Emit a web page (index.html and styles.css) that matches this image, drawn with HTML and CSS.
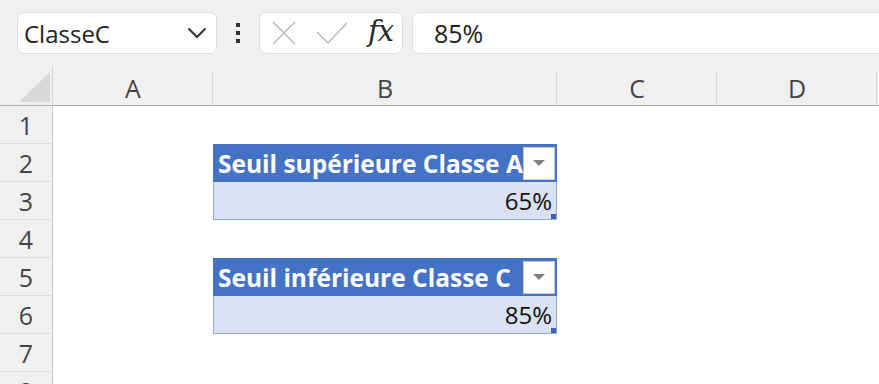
FILE: index.html
```html
<!DOCTYPE html>
<html lang="fr">
<head>
  <meta charset="UTF-8" />
  <meta name="viewport" content="width=device-width, initial-scale=1.0"/>
  <title>Classeur</title>
  <link rel="stylesheet" href="styles.css">
</head>
<body>
  <div class="toolbar">
    <div class="name-box">
      <span class="name">ClasseC</span>
      <svg class="chevron" width="20" height="12" viewBox="0 0 20 12">
        <path d="M1.5 1.5 L10 10 L18.5 1.5" fill="none" stroke="#333" stroke-width="2"/>
      </svg>
    </div>
    <div class="dots">
      <span></span><span></span><span></span>
    </div>
    <div class="fx-box">
      <svg class="icon-x" width="24" height="24" viewBox="0 0 24 24">
        <path d="M1 1 L23 23 M23 1 L1 23" stroke="#bdbdbd" stroke-width="1.6" fill="none"/>
      </svg>
      <svg class="icon-check" width="32" height="22" viewBox="0 0 32 22">
        <path d="M1 10 L12 21 L31 1" stroke="#bdbdbd" stroke-width="1.6" fill="none"/>
      </svg>
      <span class="fx">fx</span>
    </div>
    <div class="formula">85%</div>
  </div>

  <div class="sheet">
    <div class="corner"><span class="tri"></span></div>
    <div class="col-head">A</div>
    <div class="col-head">B</div>
    <div class="col-head">C</div>
    <div class="col-head">D</div>
    <div class="col-head last"></div>

    <div class="row-head">1</div>
    <div class="row-head">2</div>
    <div class="row-head">3</div>
    <div class="row-head">4</div>
    <div class="row-head">5</div>
    <div class="row-head">6</div>
    <div class="row-head">7</div>
    <div class="row-head">8</div>

    <div class="tbl tbl-a">
      <div class="tbl-head">
        <span>Seuil supérieure Classe A</span>
        <span class="filter"></span>
      </div>
      <div class="tbl-cell">65%<span class="handle"></span></div>
    </div>

    <div class="tbl tbl-c">
      <div class="tbl-head">
        <span>Seuil inférieure Classe C</span>
        <span class="filter"></span>
      </div>
      <div class="tbl-cell">85%<span class="handle"></span></div>
    </div>
  </div>
</body>
</html>
```

FILE: styles.css
```css
body {
  margin: 0;
  padding: 0;
  font-family: 'Open Sans', 'Noto Sans', sans-serif;
  background-color: #f0f0f0;
  color: #222;
  height: 384px;
  overflow: hidden;
}

/* formula bar */
.toolbar {
  display: flex;
  align-items: center;
  height: 66px;
  padding-left: 17px;
  box-sizing: border-box;
  overflow: hidden;
}

.name-box, .fx-box, .formula {
  height: 42px;
  box-sizing: border-box;
  background: #fff;
  border: 1px solid #dedede;
  border-radius: 7px;
  display: flex;
  align-items: center;
}

.name-box {
  width: 200px;
  padding: 0 9px 0 6px;
  justify-content: space-between;
}

.name {
  font-size: 24px;
  color: #222;
}

.dots {
  width: 42px;
  display: flex;
  flex-direction: column;
  align-items: center;
  gap: 4px;
}

.dots span {
  width: 4px;
  height: 4px;
  background: #333;
}

.fx-box {
  width: 144px;
  padding: 0 9px 0 12px;
  gap: 20px;
}

.fx {
  font-family: 'DejaVu Serif', 'Liberation Serif', serif;
  font-style: italic;
  font-size: 29px;
  color: #2a2a2a;
  margin-left: auto;
  line-height: 1;
  margin-bottom: 3px;
  letter-spacing: -1px;
}

.formula {
  flex: 1;
  margin-left: 9px;
  margin-right: -20px;
  padding-left: 21px;
  font-size: 25px;
  color: #222;
}

/* grid */
.sheet {
  display: grid;
  grid-template-columns: 53px 160px 344px 160px 160px 1fr;
  grid-template-rows: 40px repeat(8, 38px);
  background: #fff;
}

.corner {
  background: #f0f0f0;
  border-bottom: 1px solid #ababab;
  border-right: 1px solid #d2d2d2;
  display: flex;
  align-items: flex-end;
  justify-content: flex-end;
  padding: 0 2px 3px 0;
}

.tri {
  width: 31px;
  height: 30px;
  background: #d8d8d8;
  clip-path: polygon(100% 0, 100% 100%, 0 100%);
}

.col-head {
  background: linear-gradient(#d6d6d6, #d6d6d6) right 6px / 1px calc(100% - 6px) no-repeat, #f0f0f0;
  border-bottom: 1px solid #ababab;
  font-size: 25px;
  color: #444;
  display: flex;
  align-items: center;
  justify-content: center;
  padding-top: 4px;
}

.col-head.last {
  background: #f0f0f0;
}

.row-head {
  grid-column: 1;
  background: #f0f0f0;
  border-right: 1px solid #c8c8c8;
  border-bottom: 1px solid #dcdcdc;
  font-size: 25px;
  color: #444;
  display: flex;
  align-items: center;
  justify-content: center;
}

/* tables */
.tbl {
  grid-column: 3;
  display: flex;
  flex-direction: column;
}

.tbl-a {
  grid-row: 3 / span 2;
}

.tbl-c {
  grid-row: 6 / span 2;
}

.tbl-head {
  height: 38px;
  background: #4472c4;
  color: #fff;
  font-weight: bold;
  font-size: 24.5px;
  display: flex;
  align-items: center;
  padding-left: 5px;
  white-space: nowrap;
  overflow: hidden;
}

.filter {
  flex-shrink: 0;
  margin-left: auto;
  margin-right: 2px;
  width: 32px;
  height: 33px;
  box-sizing: border-box;
  background: #fff;
  border: 1px solid #c9c9c9;
  display: flex;
  align-items: center;
  justify-content: center;
}

.filter::after {
  content: "";
  border-left: 6px solid transparent;
  border-right: 6px solid transparent;
  border-top: 6px solid #808080;
}

.tbl-cell {
  position: relative;
  height: 38px;
  box-sizing: border-box;
  background: #d9e1f2;
  border: 1px solid #8eaadb;
  border-top: none;
  font-size: 24px;
  color: #111;
  display: flex;
  align-items: center;
  justify-content: flex-end;
  padding-right: 4px;
}

.handle {
  position: absolute;
  right: 0;
  bottom: 0;
  width: 5px;
  height: 5px;
  background: #4060b8;
}
```
